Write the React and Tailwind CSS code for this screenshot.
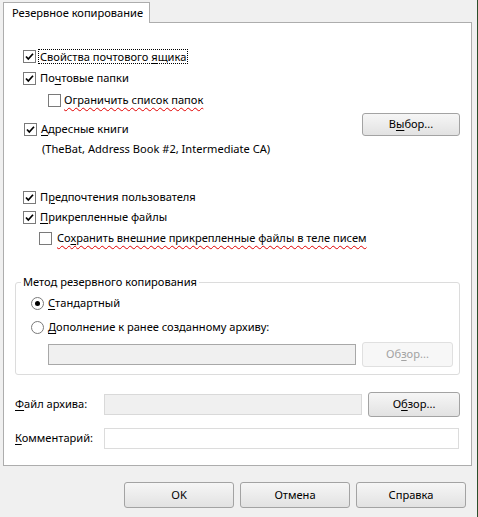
import React from 'react'

const font = { fontFamily: '"Noto Sans", "Open Sans", sans-serif' }

function Check({ checked }) {
  return (
    <span className="w-[13px] h-[13px] border border-[#7a7a7a] bg-white flex items-center justify-center shrink-0">
      {checked && (
        <svg width="11" height="11" viewBox="0 0 11 11">
          <path d="M2 5.5 L4.3 8 L9 2.8" fill="none" stroke="#000" strokeWidth="1.7" />
        </svg>
      )}
    </span>
  )
}

function Radio({ checked }) {
  return (
    <span className="w-[13px] h-[13px] rounded-full border border-[#7a7a7a] bg-white flex items-center justify-center shrink-0">
      {checked && <span className="w-[5px] h-[5px] rounded-full bg-black"></span>}
    </span>
  )
}

function U({ children }) {
  return <span className="underline underline-offset-2">{children}</span>
}

function Btn({ children, className = '', disabled }) {
  return (
    <div
      className={
        'flex items-center justify-center rounded-[3px] border ' +
        (disabled
          ? 'border-[#e0e0e0] bg-[#f7f7f7] text-[#a3a3a3] '
          : 'border-[#a3a3a3] bg-linear-to-b from-[#f6f6f6] to-[#e2e2e2] text-black ') +
        className
      }
    >
      {children}
    </div>
  )
}

export default function App() {
  return (
    <div className="w-[478px] h-[517px] bg-[#f0f0f0] border-r border-[#2c4f2c] pl-[3px] pt-[2px] text-[11.1px] text-black whitespace-nowrap" style={font}>
      {/* tab header */}
      <div className="relative z-10 -mb-px w-[147px] h-[21px] border border-b-0 border-[#adadad] bg-white pl-[8px] flex items-center">
        Резервное копирование
      </div>

      {/* tab page */}
      <div className="w-[469px] h-[444px] border border-[#adadad] bg-white flex flex-col pt-[22px]">
        <div className="h-[22px] flex items-center pl-[19px] gap-[3px]">
          <Check checked />
          <span className="outline outline-1 outline-dotted outline-black px-[1px] leading-[13px]">
            Свойства почтового <U>я</U>щика
          </span>
        </div>
        <div className="h-[22px] flex items-center pl-[19px] gap-[4px]">
          <Check checked />
          <span>По<U>ч</U>товые папки</span>
        </div>
        <div className="h-[22px] flex items-center pl-[44px] gap-[3px]">
          <Check />
          <span className="underline decoration-wavy decoration-[#e00000] decoration-1 underline-offset-[3px]">
            Ограничить список папок
          </span>
        </div>

        <div className="flex justify-between pr-[11px]">
          <div className="flex flex-col">
            <div className="mt-[8px] h-[20px] flex items-center pl-[20px] gap-[4px]">
              <Check checked />
              <span><U>А</U>дресные книги</span>
            </div>
            <div className="h-[20px] flex items-center pl-[38px]">
              (TheBat, Address Book #2, Intermediate CA)
            </div>
          </div>
          <Btn className="mt-[2px] w-[98px] h-[23px]">
            В<U>ы</U>бор...
          </Btn>
        </div>

        <div className="mt-[27px] h-[22px] flex items-center pl-[19px] gap-[4px]">
          <Check checked />
          <span>П<U>р</U>едпочтения пользователя</span>
        </div>
        <div className="h-[19px] flex items-center pl-[19px] gap-[4px]">
          <Check checked />
          <span><U>П</U>рикрепленные файлы</span>
        </div>
        <div className="h-[22px] flex items-center pl-[35px] gap-[5px]">
          <Check />
          <span className="underline decoration-wavy decoration-[#e00000] decoration-1 underline-offset-[3px]">
            Со<U>х</U>ранить внешние прикрепленные файлы в теле писем
          </span>
        </div>

        <fieldset className="mt-[25px] ml-[11px] w-[445px] border border-[#dcdcdc] rounded-[3px] pb-[7px]">
          <legend className="ml-[5px] px-[2px] leading-[16px]">Метод резервного копирования</legend>
          <div className="mt-[2px] h-[22px] flex items-center pl-[15px] gap-[4px]">
            <Radio checked />
            <span><U>С</U>тандартный</span>
          </div>
          <div className="mt-[2px] h-[22px] flex items-center pl-[15px] gap-[4px]">
            <Radio />
            <span><U>Д</U>ополнение к ранее созданному архиву:</span>
          </div>
          <div className="mt-[4px] h-[25px] flex items-center pl-[32px]">
            <div className="w-[308px] h-[21px] border border-[#a8a8a8] bg-[#f0f0f0]"></div>
            <Btn disabled className="ml-[6px] w-[91px] h-[25px]">
              Об<U>з</U>ор...
            </Btn>
          </div>
        </fieldset>

        <div className="mt-[17px] h-[25px] flex items-center pl-[11px]">
          <span className="w-[89px]"><U>Ф</U>айл архива:</span>
          <div className="w-[258px] h-[21px] border border-[#d9d9d9] bg-[#f0f0f0]"></div>
          <Btn className="ml-[6px] w-[92px] h-[25px]">
            О<U>б</U>зор...
          </Btn>
        </div>

        <div className="mt-[11px] h-[21px] flex items-center pl-[11px]">
          <span className="w-[89px]"><U>К</U>омментарий:</span>
          <div className="w-[355px] h-[21px] border border-[#dcdcdc] bg-white"></div>
        </div>
      </div>

      {/* dialog buttons */}
      <div className="mt-[16px] flex justify-end gap-[6px] pr-[11px]">
        <Btn className="w-[110px] h-[26px]">OK</Btn>
        <Btn className="w-[110px] h-[26px]">Отмена</Btn>
        <Btn className="w-[110px] h-[26px]">Справка</Btn>
      </div>
    </div>
  )
}
